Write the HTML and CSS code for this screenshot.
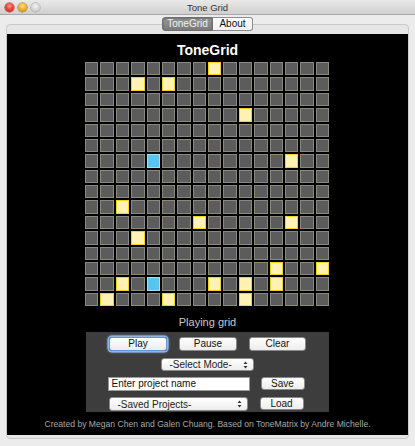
FILE: index.html
```html
<!DOCTYPE html>
<html>
<head>
<meta charset="utf-8">
<title>Tone Grid</title>
<link rel="stylesheet" href="styles.css">
</head>
<body>
<div class="window">
  <div class="titlebar">
    <div class="lights">
      <span class="light red"></span>
      <span class="light amber"></span>
      <span class="light grey"></span>
    </div>
    <div class="wtitle">Tone Grid</div>
    <div class="lights-spacer"></div>
  </div>
  <div class="tabs">
    <span class="tab sel">ToneGrid</span><span class="tab">About</span>
  </div>
  <div class="tabbox">
    <div class="panel">
      <div class="apptitle">ToneGrid</div>
      <div class="grid">
        <i></i><i></i><i></i><i></i><i></i><i></i><i></i><i></i><i class="y"></i><i></i><i></i><i></i><i></i><i></i><i></i><i></i>
        <i></i><i></i><i></i><i class="y"></i><i></i><i class="y"></i><i></i><i></i><i></i><i></i><i></i><i></i><i></i><i></i><i></i><i></i>
        <i></i><i></i><i></i><i></i><i></i><i></i><i></i><i></i><i></i><i></i><i></i><i></i><i></i><i></i><i></i><i></i>
        <i></i><i></i><i></i><i></i><i></i><i></i><i></i><i></i><i></i><i></i><i class="y"></i><i></i><i></i><i></i><i></i><i></i>
        <i></i><i></i><i></i><i></i><i></i><i></i><i></i><i></i><i></i><i></i><i></i><i></i><i></i><i></i><i></i><i></i>
        <i></i><i></i><i></i><i></i><i></i><i></i><i></i><i></i><i></i><i></i><i></i><i></i><i></i><i></i><i></i><i></i>
        <i></i><i></i><i></i><i></i><i class="b"></i><i></i><i></i><i></i><i></i><i></i><i></i><i></i><i></i><i class="y"></i><i></i><i></i>
        <i></i><i></i><i></i><i></i><i></i><i></i><i></i><i></i><i></i><i></i><i></i><i></i><i></i><i></i><i></i><i></i>
        <i></i><i></i><i></i><i></i><i></i><i></i><i></i><i></i><i></i><i></i><i></i><i></i><i></i><i></i><i></i><i></i>
        <i></i><i></i><i class="y"></i><i></i><i></i><i></i><i></i><i></i><i></i><i></i><i></i><i></i><i></i><i></i><i></i><i></i>
        <i></i><i></i><i></i><i></i><i></i><i></i><i></i><i class="y"></i><i></i><i></i><i></i><i></i><i></i><i class="y"></i><i></i><i></i>
        <i></i><i></i><i></i><i class="y"></i><i></i><i></i><i></i><i></i><i></i><i></i><i></i><i></i><i></i><i></i><i></i><i></i>
        <i></i><i></i><i></i><i></i><i></i><i></i><i></i><i></i><i></i><i></i><i></i><i></i><i></i><i></i><i></i><i></i>
        <i></i><i></i><i></i><i></i><i></i><i></i><i></i><i></i><i></i><i></i><i></i><i></i><i class="y"></i><i></i><i></i><i class="y"></i>
        <i></i><i></i><i class="y"></i><i></i><i class="b"></i><i></i><i></i><i></i><i class="y"></i><i></i><i class="y"></i><i></i><i class="y"></i><i></i><i></i><i></i>
        <i></i><i class="y"></i><i></i><i></i><i></i><i class="y"></i><i></i><i></i><i></i><i></i><i class="y"></i><i></i><i></i><i></i><i></i><i></i>
      </div>
      <div class="status">Playing grid</div>
      <div class="controls">
        <div class="row1">
          <span class="btn focus btn-play">Play</span>
          <span class="btn btn-pause">Pause</span>
          <span class="btn btn-clear">Clear</span>
        </div>
        <div class="row2">
          <span class="select select-mode">-Select Mode-<svg class="arrows" width="5" height="8" viewBox="0 0 5 8"><path d="M0.5 3 L2.5 0.5 L4.5 3 Z M0.5 5 L2.5 7.5 L4.5 5 Z" fill="#333"/></svg></span>
        </div>
        <div class="row3">
          <span class="input">Enter project name</span>
          <span class="btn btn-small">Save</span>
        </div>
        <div class="row4">
          <span class="select select-saved">-Saved Projects-<svg class="arrows" width="5" height="8" viewBox="0 0 5 8"><path d="M0.5 3 L2.5 0.5 L4.5 3 Z M0.5 5 L2.5 7.5 L4.5 5 Z" fill="#333"/></svg></span>
          <span class="btn btn-small">Load</span>
        </div>
      </div>
      <div class="footer">Created by Megan Chen and Galen Chuang. Based on ToneMatrix by Andre Michelle.</div>
    </div>
  </div>
</div>
</body>
</html>
```
FILE: styles.css
```css
* { box-sizing: border-box; }
html, body {
  margin: 0;
  padding: 0;
  width: 415px;
  height: 446px;
  overflow: hidden;
  background: #ececec;
  font-family: "Liberation Sans", Arial, sans-serif;
}
.window {
  width: 415px;
  height: 446px;
  display: flex;
  flex-direction: column;
}
.titlebar {
  height: 15px;
  display: flex;
  align-items: center;
  background: linear-gradient(#e9e9e9, #cfcfcf);
  border-bottom: 1px solid #a8a8a8;
}
.lights {
  width: 50px;
  display: flex;
  gap: 4px;
  padding-left: 5px;
  align-items: center;
}
.lights-spacer { width: 50px; }
.light {
  width: 9px;
  height: 9px;
  border-radius: 50%;
  display: block;
}
.red {
  background: radial-gradient(circle at 50% 35%, #ff9a8f 0, #ee4537 45%, #b8231a 100%);
  box-shadow: 0 0 0 0.5px #9b2a22;
}
.amber {
  background: radial-gradient(circle at 50% 35%, #ffe39a 0, #f3b12c 45%, #c2800f 100%);
  box-shadow: 0 0 0 0.5px #a06d10;
}
.grey {
  background: radial-gradient(circle at 50% 35%, #f4f4f4 0, #d6d6d6 50%, #b0b0b0 100%);
  box-shadow: 0 0 0 0.5px #999;
}
.wtitle {
  flex: 1;
  text-align: center;
  font-size: 9.5px;
  color: #333;
  line-height: 14px;
  padding-top: 1px;
}
.tabs {
  margin-top: 2px;
  display: flex;
  justify-content: center;
  position: relative;
  z-index: 1;
}
.tab {
  height: 14px;
  line-height: 12px;
  font-size: 10px;
  text-align: center;
  border: 1px solid #8c8c8c;
  background: linear-gradient(#ffffff, #f1f1f1);
  color: #111;
  width: 40px;
  border-radius: 0 3px 3px 0;
  border-left: none;
}
.tab.sel {
  width: 51px;
  border-radius: 3px 0 0 3px;
  border-left: 1px solid #777;
  border-color: #6f6f6f;
  background: linear-gradient(#979797, #7a7a7a);
  color: #f0f0f0;
  box-shadow: inset 0 1px 2px rgba(0,0,0,0.25);
}
.tabbox {
  margin: -7px 6px 0 6px;
  height: 415px;
  border: 1px solid #c9c9c9;
  border-radius: 4px;
  background: #e6e6e6;
  padding: 9px 0 0 0;
}
.panel {
  background: #000;
  height: 401px;
  margin: 0;
  display: flex;
  flex-direction: column;
  align-items: center;
  padding-top: 8px;
}
.apptitle {
  color: #fff;
  font-weight: bold;
  font-size: 14px;
  line-height: 16px;
  height: 16px;
}
.grid {
  margin-top: 4px;
  width: 244px;
  height: 244px;
  display: grid;
  grid-template-columns: repeat(16, 1fr);
  grid-template-rows: repeat(16, 1fr);
  gap: 2px;
  margin-left: -1px;
}
.grid i {
  display: block;
  background: #5c5c5c;
  border: 1.6px solid #8a8a7c;
}
.grid i.y {
  background: #fff2b4;
  border-color: #f3d420;
}
.grid i.b {
  background: #58c5ef;
  border-color: #a3e1f6;
}
.status {
  margin-top: 10px;
  color: #c8c8c8;
  font-size: 11px;
  line-height: 13px;
  height: 13px;
}
.controls {
  margin-top: 3px;
  width: 243px;
  height: 80px;
  margin-left: -1px;
  background: #3d3d3d;
  padding-top: 5px;
  display: flex;
  flex-direction: column;
}
.btn {
  display: block;
  height: 14px;
  line-height: 12px;
  font-size: 10px;
  text-align: center;
  color: #111;
  border: 1px solid #8a8a8a;
  border-radius: 3px;
  background: linear-gradient(#ffffff, #ececec);
}
.btn.focus {
  border-color: #6b95c9;
  box-shadow: 0 0 0 1.5px #8fb5e6, 0 0 2px 2px rgba(120,165,225,0.6);
}
.row1 {
  display: flex;
  justify-content: center;
  gap: 12px;
  padding-left: 1px;
}
.btn-play, .btn-pause { width: 58px; }
.btn-clear { width: 57px; }
.row2 {
  margin-top: 7px;
  display: flex;
  justify-content: center;
}
.select {
  display: flex;
  align-items: center;
  justify-content: space-between;
  height: 13px;
  font-size: 10px;
  color: #222;
  padding: 0 5px 0 8px;
  border: 1px solid #8a8a8a;
  border-radius: 3px;
  background: linear-gradient(#ffffff, #ededed);
}
.select-mode { width: 93px; }
.arrows { display: block; }
.row3, .row4 {
  display: flex;
  align-items: flex-start;
  padding-left: 22px;
  gap: 11px;
  margin-top: 6px;
}
.input {
  display: block;
  width: 142px;
  height: 14px;
  line-height: 12px;
  font-size: 10px;
  color: #111;
  background: #fff;
  border: 1px solid #9a9a9a;
  padding-left: 3px;
}
.btn-small { width: 44px; height: 13px; line-height: 11px; }
.select-saved {
  width: 139px;
  height: 14px;
  margin-left: 1px;
  margin-right: 1px;
}
.footer {
  margin-top: 6px;
  color: #a9a9a9;
  font-size: 8.6px;
  line-height: 12px;
}
```
